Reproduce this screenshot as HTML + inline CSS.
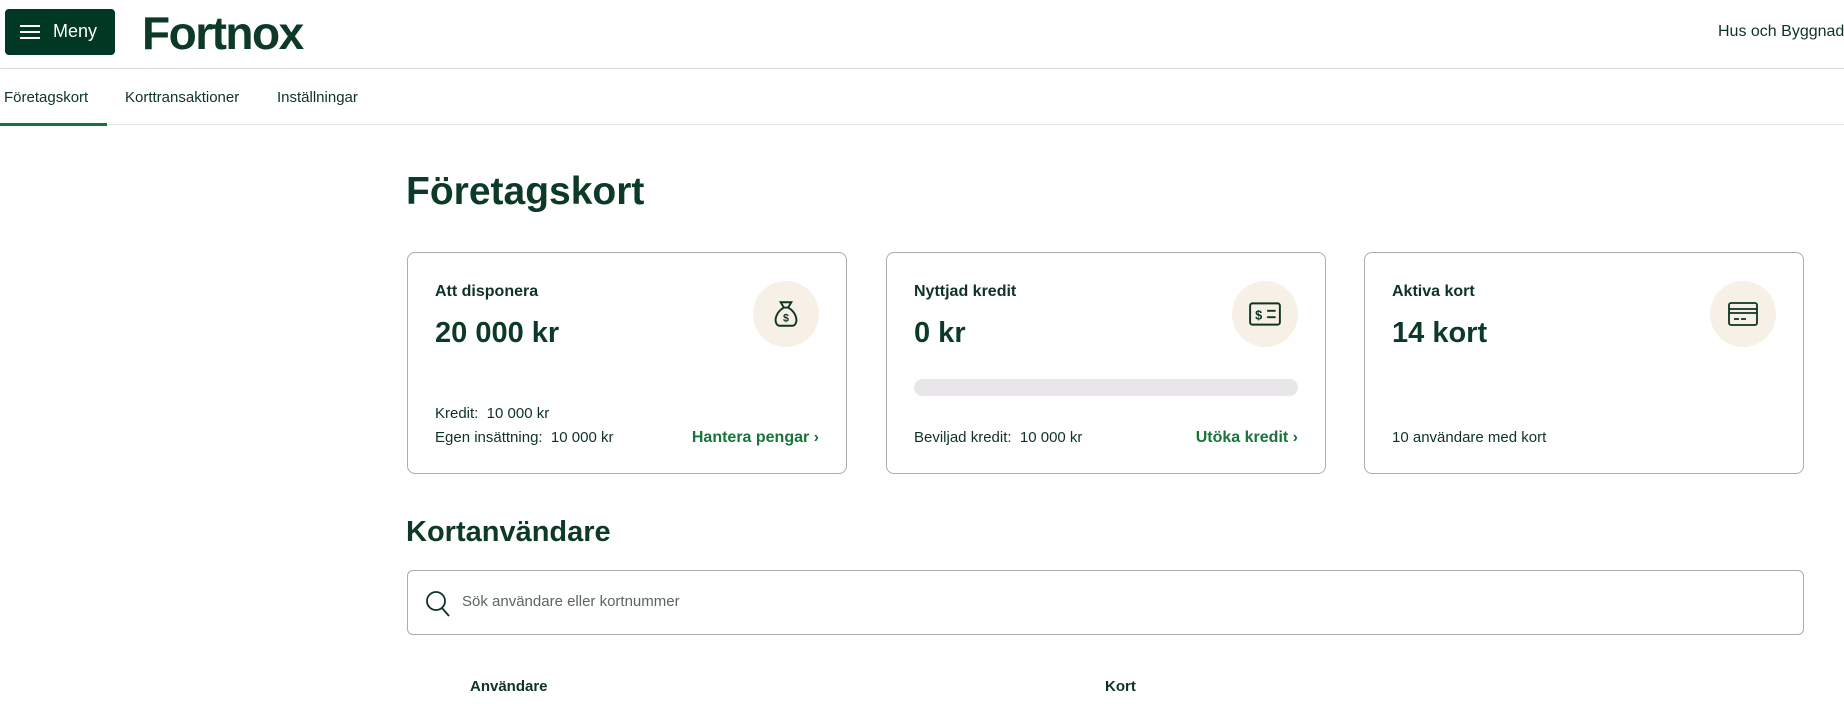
<!DOCTYPE html>
<html><head><meta charset="utf-8"><style>
*{box-sizing:border-box;margin:0;padding:0}
body{width:1844px;height:704px;overflow:hidden;background:#fff;font-family:"Liberation Sans",sans-serif;color:#0e3323;position:relative}
.abs{position:absolute;white-space:nowrap}
.menu{left:5px;top:9px;width:110px;height:46px;background:#003824;border-radius:4px;color:#fff;font-size:18px}
.card{position:absolute;top:252px;width:440px;height:222px;border:1.5px solid #a8aeab;border-radius:8px}
.lbl{position:absolute;left:27px;top:30px;font-size:16px;font-weight:bold;color:#0e3323}
.amt{position:absolute;left:27px;top:64px;font-size:29px;font-weight:bold;color:#0c3a26}
.ic{position:absolute;right:27px;top:28px;width:66px;height:66px;border-radius:50%;background:#f6f0e6;display:flex;align-items:center;justify-content:center}
.tx{position:absolute;left:27px;font-size:15px;color:#0e3323}
.lnk{position:absolute;right:27px;top:176px;font-size:16px;font-weight:bold;color:#17753a}
</style></head><body>
<div class="abs menu">
 <div style="position:absolute;left:15px;top:16px;width:20px;height:2px;background:#fff"></div>
 <div style="position:absolute;left:15px;top:22px;width:20px;height:2px;background:#fff"></div>
 <div style="position:absolute;left:15px;top:28px;width:20px;height:2px;background:#fff"></div>
 <span style="position:absolute;left:48px;top:12px">Meny</span>
</div>
<div class="abs" style="left:142px;top:6px;font-size:46px;font-weight:bold;color:#0c3a26;letter-spacing:-1.5px">Fortnox</div>
<div class="abs" style="left:1718px;top:23px;font-size:16px;color:#0e3323">Hus och Byggnad</div>
<div class="abs" style="left:0;top:68px;width:1844px;height:1px;background:#dcdcdc"></div>
<div class="abs" style="left:4px;top:89px;font-size:15px;color:#0e3323">Företagskort</div>
<div class="abs" style="left:125px;top:89px;font-size:15px;color:#0e3323">Korttransaktioner</div>
<div class="abs" style="left:277px;top:89px;font-size:15px;color:#0e3323">Inställningar</div>
<div class="abs" style="left:0;top:124px;width:1844px;height:1px;background:#e4e4e4"></div>
<div class="abs" style="left:0;top:123px;width:107px;height:3px;background:#17753a"></div>
<div class="abs" style="left:406px;top:170px;font-size:39px;font-weight:bold;color:#0c3a26">Företagskort</div>

<div class="card" style="left:407px">
 <div class="lbl">Att disponera</div><div class="amt">20 000 kr</div>
 <div class="ic"><svg width="32" height="32" viewBox="0 0 30 30" fill="none" stroke="#0e3323" stroke-width="1.8"><path d="M10 4h10l-3 5h-4z"/><path d="M13 9C6 13 4 20 6 24q1 2 3 2h12q2 0 3-2c2-4 0-11-7-15"/><text x="15" y="22" font-size="10" text-anchor="middle" fill="#0e3323" stroke="none" font-weight="bold" font-family="Liberation Sans">$</text></svg></div>
 <div class="tx" style="top:152px">Kredit:&nbsp; 10 000 kr</div>
 <div class="tx" style="top:176px">Egen insättning:&nbsp; 10 000 kr</div>
 <div class="lnk">Hantera pengar ›</div>
</div>
<div class="card" style="left:886px">
 <div class="lbl">Nyttjad kredit</div><div class="amt">0 kr</div>
 <div class="ic"><svg width="34" height="28" viewBox="0 0 32 26" fill="none" stroke="#0e3323" stroke-width="1.8"><rect x="2" y="3" width="28" height="20" rx="2"/><path d="M18 10h8M18 16h8"/><text x="10" y="18" font-size="12" text-anchor="middle" fill="#0e3323" stroke="none" font-weight="bold" font-family="Liberation Sans">$</text></svg></div>
 <div style="position:absolute;left:27px;top:126px;width:384px;height:17px;border-radius:9px;background:#e8e6e8"></div>
 <div class="tx" style="top:176px">Beviljad kredit:&nbsp; 10 000 kr</div>
 <div class="lnk">Utöka kredit ›</div>
</div>
<div class="card" style="left:1364px">
 <div class="lbl">Aktiva kort</div><div class="amt">14 kort</div>
 <div class="ic"><svg width="32" height="28" viewBox="0 0 32 28" fill="none" stroke="#0e3323" stroke-width="1.8"><rect x="2" y="3" width="28" height="22" rx="2"/><path d="M2 9h28M2 13h28M7 19h5M14 19h5"/></svg></div>
 <div class="tx" style="top:176px">10 användare med kort</div>
</div>

<div class="abs" style="left:406px;top:516px;font-size:29px;font-weight:bold;color:#0c3a26">Kortanvändare</div>
<div class="abs" style="left:407px;top:570px;width:1397px;height:65px;border:1.5px solid #a8aeab;border-radius:6px">
 <svg style="position:absolute;left:17px;top:19px" width="26" height="28" viewBox="0 0 26 28" fill="none" stroke="#0e3323" stroke-width="1.8"><circle cx="11" cy="11" r="9"/><path d="M17 18l7 8"/></svg>
 <div style="position:absolute;left:54px;top:22px;font-size:15px;color:#5a6660">Sök användare eller kortnummer</div>
</div>
<div class="abs" style="left:470px;top:678px;font-size:15px;font-weight:bold">Användare</div>
<div class="abs" style="left:1105px;top:678px;font-size:15px;font-weight:bold">Kort</div>
</body></html>
